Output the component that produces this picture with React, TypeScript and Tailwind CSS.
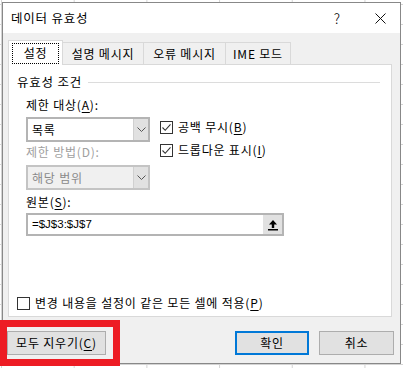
import React from "react";

function Check({ checked }: { checked?: boolean }) {
  return (
    <span className="w-[13px] h-[13px] border border-[#333333] bg-white flex items-center justify-center shrink-0">
      {checked && (
        <svg width="11" height="11" viewBox="0 0 11 11">
          <path d="M1.5 5.5 L4.2 8.3 L9.5 2.3" stroke="#333333" strokeWidth="1.1" fill="none" />
        </svg>
      )}
    </span>
  );
}

function Chevron({ color = "#555555" }: { color?: string }) {
  return (
    <svg width="9" height="5" viewBox="0 0 9 5">
      <path d="M0.5 0.5 L4.5 4.5 L8.5 0.5" stroke={color} strokeWidth="1" fill="none" />
    </svg>
  );
}

function U({ children }: { children: React.ReactNode }) {
  return <span className="underline underline-offset-2">{children}</span>;
}

export default function App() {
  return (
    <div className="relative w-[403px] h-[368px] overflow-hidden bg-white bg-[linear-gradient(to_right,#d4d4d4_1px,transparent_1px),linear-gradient(to_bottom,#d4d4d4_1px,transparent_1px)] bg-[size:72.7px_20px] bg-[position:1px_4px] font-['Noto_Sans_CJK_KR',sans-serif] text-[12px] tracking-[0.8px] text-black leading-none">
      <div className="ml-[2px] mt-[2px] w-[399px] h-[362px] border border-[#888888] bg-[#f0f0f0] flex flex-col">
        {/* title bar */}
        <div className="h-[30px] bg-white flex items-center shrink-0">
          <span className="pl-[8px] text-[12.5px]">데이터 유효성</span>
          <span className="ml-auto w-[20px] text-center text-[14px] font-light mr-[28px] tracking-normal">?</span>
          <span className="mr-[14px] flex items-center">
            <svg width="11" height="11" viewBox="0 0 11 11">
              <path d="M0.5 0.5 L10.5 10.5 M10.5 0.5 L0.5 10.5" stroke="#111111" strokeWidth="1" />
            </svg>
          </span>
        </div>

        {/* tabs */}
        <div className="pl-[5px] flex items-end h-[31px] shrink-0 relative z-10">
          <div className="w-[55px] h-[25px] bg-white border border-[#d9d9d9] border-b-0 -mb-px flex items-center justify-center">
            <span className="border border-dotted border-black px-[11px] py-[3px] pb-[4px]">설정</span>
          </div>
          <div className="w-[81px] h-[22px] border border-[#d9d9d9] border-b-0 border-l-0 flex items-center justify-center">설명 메시지</div>
          <div className="w-[82px] h-[22px] border border-[#d9d9d9] border-b-0 border-l-0 flex items-center justify-center">오류 메시지</div>
          <div className="w-[65px] h-[22px] border border-[#d9d9d9] border-b-0 border-l-0 flex items-center justify-center">IME 모드</div>
        </div>

        {/* panel */}
        <div className="ml-[5px] w-[384px] h-[253px] bg-white border border-[#d9d9d9] flex flex-col shrink-0">
          <div className="mt-[9px] h-[16px] flex items-center pl-[8px]">
            <span className="text-[12.5px]">유효성 조건</span>
            <span className="ml-[6px] h-px w-[292px] bg-[#dcdcdc]" />
          </div>

          <div className="flex pl-[17px] mt-[7px]">
            <div className="w-[124px] flex flex-col">
              <div className="h-[16px] flex items-center">
                제한 대상(<U>A</U>):
              </div>
              <div className="mt-[4px] h-[25px] border-2 border-[#b4b4b4] flex bg-white">
                <div className="flex-1 flex items-center pl-[4px]">목록</div>
                <div className="w-[15px] bg-[#e1e1e1] border-l border-[#d0d0d0] flex items-center justify-center">
                  <Chevron />
                </div>
              </div>
              <div className="mt-[2px] h-[16px] flex items-center text-[#a0a0a0]">제한 방법(D):</div>
              <div className="mt-[5px] h-[25px] border-2 border-[#c4c4c4] flex bg-[#f0f0f0]">
                <div className="flex-1 flex items-center pl-[4px] text-[#8a8a8a]">해당 범위</div>
                <div className="w-[15px] bg-[#e1e1e1] border-l border-[#d0d0d0] flex items-center justify-center">
                  <Chevron />
                </div>
              </div>
            </div>
            <div className="ml-[10px] flex flex-col">
              <div className="mt-[22px] h-[16px] flex items-center gap-[5px]">
                <Check checked />
                <span>
                  공백 무시(<U>B</U>)
                </span>
              </div>
              <div className="mt-[7px] h-[16px] flex items-center gap-[5px]">
                <Check checked />
                <span>
                  드롭다운 표시(<U>I</U>)
                </span>
              </div>
            </div>
          </div>

          <div className="pl-[17px] mt-[4px] h-[16px] flex items-center">
            원본(<U>S</U>):
          </div>
          <div className="ml-[17px] mt-[3px] w-[258px] h-[23px] border-2 border-[#b4b4b4] flex bg-white">
            <div className="flex-1 flex items-center pl-[4px] font-['Liberation_Sans',sans-serif] tracking-normal text-[11.5px]">=$J$3:$J$7</div>
            <div className="w-[19px] bg-[#e1e1e1] flex items-center justify-center">
              <svg width="12" height="12" viewBox="0 0 12 12">
                <path d="M6 1 L10 5.5 L7.2 5.5 L7.2 9 L4.8 9 L4.8 5.5 L2 5.5 Z" fill="#000000" />
                <rect x="1" y="10" width="10" height="1.5" fill="#000000" />
              </svg>
            </div>
          </div>

          <div className="flex-1" />
          <div className="pl-[8px] h-[16px] flex items-center gap-[5px] mb-[5px]">
            <Check />
            <span>
              변경 내용을 설정이 같은 모든 셀에 적용(<U>P</U>)
            </span>
          </div>
        </div>

        {/* buttons */}
        <div className="flex items-center mt-[14px] pl-[4px] pr-[6px]">
          <div className="w-[99px] h-[24px] bg-[#e1e1e1] border border-[#adadad] flex items-center justify-center">
            모두 지우기(<U>C</U>)
          </div>
          <div className="ml-auto w-[74px] h-[24px] bg-[#e1e1e1] border-2 border-[#0078d7] flex items-center justify-center">확인</div>
          <div className="ml-[10px] w-[75px] h-[24px] bg-[#e1e1e1] border border-[#adadad] flex items-center justify-center">취소</div>
        </div>
      </div>

      {/* annotation */}
      <div className="absolute left-0 top-[320px] w-[120px] h-[46px] border-[7px] border-[#ed1c24]" />
    </div>
  );
}
